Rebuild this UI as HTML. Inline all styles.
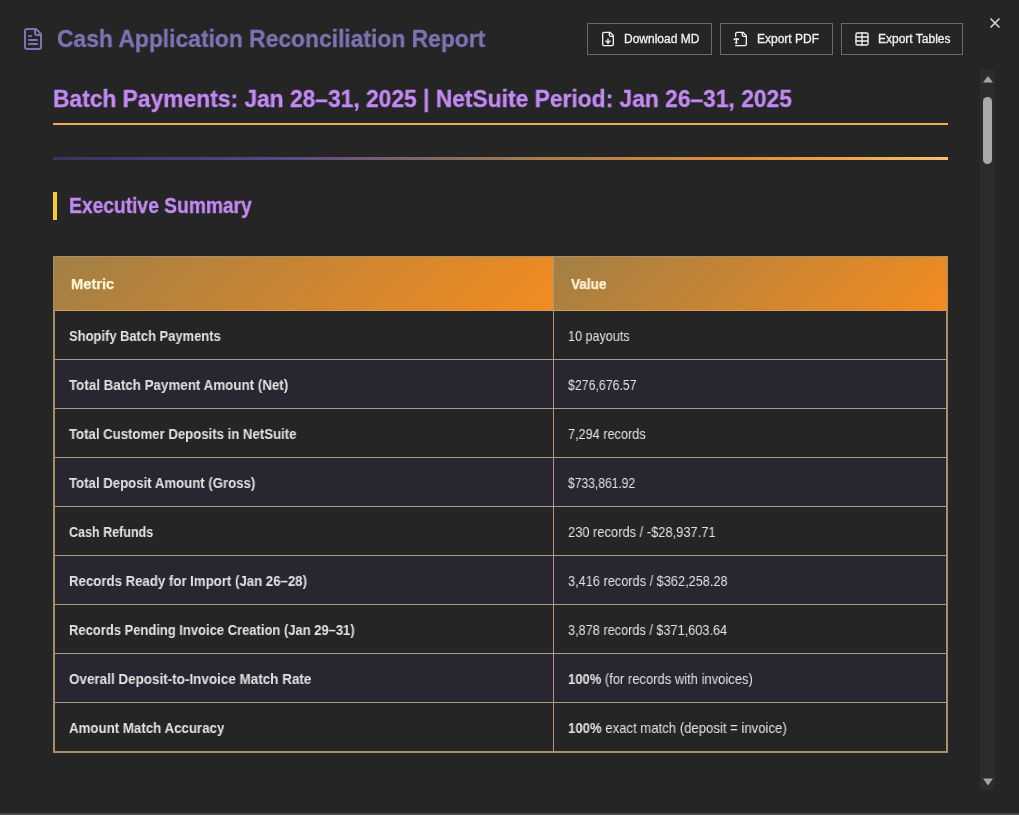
<!DOCTYPE html>
<html><head><meta charset="utf-8">
<style>
*{box-sizing:border-box;margin:0;padding:0}
html,body{width:1019px;height:815px;overflow:hidden;background:#252525;font-family:"Liberation Sans",sans-serif}
.abs{position:absolute}
#title,#h1,#h2,.k,.v,.btn span,.th span{will-change:transform}
#title{-webkit-text-stroke:0.3px #7d74b4}
#h1,#h2{-webkit-text-stroke:0.3px #c38af6}
#ticon{left:21px;top:26.5px;width:24px;height:24px}
#title{left:57px;top:25px;font-size:24px;transform:scaleX(0.952);transform-origin:0 0;font-weight:bold;color:#7d74b4;white-space:nowrap;line-height:28px}
.btn{position:absolute;top:23px;height:32px;border:1px solid #6a6a6a;color:#f0f0f0;font-size:12px;white-space:nowrap}
.btn svg{position:absolute;left:12px;top:7px;width:16px;height:16px}
.btn span{position:absolute;left:36px;top:8px;line-height:14px;-webkit-text-stroke:0.3px #f0f0f0}
#close{left:988px;top:16px;width:14px;height:14px}
#track{left:980px;top:70px;width:15px;height:720px;background:#2c2c2c}
#thumb{left:983px;top:97px;width:9px;height:67px;border-radius:5px;background:#a9a9a9}
#h1{left:53px;top:85px;font-size:24px;transform:scaleX(0.950);transform-origin:0 0;font-weight:bold;color:#c38af6;white-space:nowrap;line-height:28px}
#h1line{left:53px;top:123px;width:895px;height:2px;background:#f3aa55}
#hr{left:53px;top:157px;width:895px;height:3px;background:linear-gradient(90deg,#3a335e 0%,#574889 25%,#8a6e62 45%,#a8804e 55%,#e8903a 80%,#f5c070 100%)}
#h2bar{left:53px;top:192px;width:4px;height:28px;background:#f2cd35}
#h2{left:69.3px;top:193px;font-size:21.2px;transform:scaleX(0.908);transform-origin:0 0;font-weight:bold;color:#c38af6;white-space:nowrap;line-height:26px}
#bottomline{left:0;top:813px;width:1019px;height:2px;background:#4a4a4a}
.th{position:absolute;top:257px;height:53px;z-index:2;background:linear-gradient(135deg,#a27f44 0%,#f28b20 100%);color:#fff4d6;font-size:14px;font-weight:bold;padding:19px 0 0 16px;line-height:16px}
.th span{display:inline-block;transform-origin:0 0;-webkit-text-stroke:0.25px #fff4d6}
.row{position:absolute;left:55px;width:891px;height:48px}
.row.e{background:#272631}
.row.o{background:#252525}
.line,.hline{position:absolute;left:55px;width:891px;height:1px;background:#aa9a86}
.hline{background:#d49a5c}
.vline{position:absolute;left:553px;top:258px;width:1px;height:493px;background:#a89684}
#tborder{position:absolute;left:53px;top:256px;width:895px;height:497px;border:2px solid #a98f68}
.k,.v{position:absolute;line-height:20px;white-space:nowrap;color:#e2e2e2;transform-origin:0 0}
.k{left:69px;font-size:14.2px;font-weight:bold}
.v{left:568px;font-size:14.2px}
.v b{font-weight:bold}
</style></head><body>
<svg class="abs" id="ticon" viewBox="0 0 24 24" fill="none" stroke="#7d74b4" stroke-width="2" stroke-linecap="round" stroke-linejoin="round"><path d="M15 2H6a2 2 0 0 0-2 2v16a2 2 0 0 0 2 2h12a2 2 0 0 0 2-2V7Z"/><path d="M14 2v4a2 2 0 0 0 2 2h4"/><path d="M10 9H8"/><path d="M16 13H8"/><path d="M16 17H8"/></svg>
<div class="abs" id="title">Cash Application Reconciliation Report</div>

<div class="btn" style="left:587px;width:125px"><svg viewBox="0 0 24 24" fill="none" stroke="#f0f0f0" stroke-width="2" stroke-linecap="round" stroke-linejoin="round"><path d="M15 2H6a2 2 0 0 0-2 2v16a2 2 0 0 0 2 2h12a2 2 0 0 0 2-2V7Z"/><path d="M14 2v4a2 2 0 0 0 2 2h4"/><path d="M12 18v-6"/><path d="m9 15 3 3 3-3"/></svg><span>Download MD</span></div>
<div class="btn" style="left:720px;width:113px"><svg viewBox="0 0 24 24" fill="none" stroke="#f0f0f0" stroke-width="2" stroke-linecap="round" stroke-linejoin="round"><path d="M4 22h14a2 2 0 0 0 2-2V7l-5-5H6a2 2 0 0 0-2 2v4"/><path d="M14 2v4a2 2 0 0 0 2 2h4"/><path d="M2 13v-1h6v1"/><path d="M5 12v6"/><path d="M4 18h2"/></svg><span>Export PDF</span></div>
<div class="btn" style="left:841px;width:122px"><svg viewBox="0 0 24 24" fill="none" stroke="#f0f0f0" stroke-width="2" stroke-linecap="round" stroke-linejoin="round"><rect x="3" y="3" width="18" height="18" rx="2"/><path d="M3 9h18"/><path d="M3 15h18"/><path d="M12 3v18"/></svg><span>Export Tables</span></div>

<svg class="abs" id="close" viewBox="0 0 14 14"><path d="M3 3L11 11M11 3L3 11" stroke="#d2d2d2" stroke-width="1.7" stroke-linecap="round"/></svg>

<div class="abs" id="track"></div>
<svg class="abs" style="left:980px;top:72px;width:16px;height:12px" viewBox="0 0 16 12"><path d="M3 10.5L8 4L13 10.5Z" fill="#a3a3a3"/></svg>
<div class="abs" id="thumb"></div>
<svg class="abs" style="left:980px;top:776px;width:16px;height:12px" viewBox="0 0 16 12"><path d="M3 2.5L13 2.5L8 9.5Z" fill="#a3a3a3"/></svg>

<div class="abs" id="h1">Batch Payments: Jan 28–31, 2025 | NetSuite Period: Jan 26–31, 2025</div>
<div class="abs" id="h1line"></div>
<div class="abs" id="hr"></div>
<div class="abs" id="h2bar"></div>
<div class="abs" id="h2">Executive Summary</div>

<div class="th" style="left:54px;width:499px;padding-left:17px"><span style="transform:scaleX(1.05)">Metric</span></div>
<div class="th" style="left:554px;width:393px;padding-left:17px"><span style="transform:scaleX(0.97)">Value</span></div>
<div class="hline" style="top:310px"></div>
<div class="row o" style="top:311px"></div>
<div class="line" style="top:359px"></div>
<div class="k" style="top:326px;transform:scaleX(0.9120)">Shopify Batch Payments</div>
<div class="v" style="top:326px;transform:scaleX(0.8875)">10 payouts</div>
<div class="row e" style="top:360px"></div>
<div class="line" style="top:408px"></div>
<div class="k" style="top:375px;transform:scaleX(0.9429)">Total Batch Payment Amount (Net)</div>
<div class="v" style="top:375px;transform:scaleX(0.8690)">$276,676.57</div>
<div class="row o" style="top:409px"></div>
<div class="line" style="top:457px"></div>
<div class="k" style="top:424px;transform:scaleX(0.9288)">Total Customer Deposits in NetSuite</div>
<div class="v" style="top:424px;transform:scaleX(0.8941)">7,294 records</div>
<div class="row e" style="top:458px"></div>
<div class="line" style="top:506px"></div>
<div class="k" style="top:473px;transform:scaleX(0.9305)">Total Deposit Amount (Gross)</div>
<div class="v" style="top:473px;transform:scaleX(0.8513)">$733,861.92</div>
<div class="row o" style="top:507px"></div>
<div class="line" style="top:555px"></div>
<div class="k" style="top:522px;transform:scaleX(0.8822)">Cash Refunds</div>
<div class="v" style="top:522px;transform:scaleX(0.9086)">230 records / -$28,937.71</div>
<div class="row e" style="top:556px"></div>
<div class="line" style="top:604px"></div>
<div class="k" style="top:571px;transform:scaleX(0.9315)">Records Ready for Import (Jan 26–28)</div>
<div class="v" style="top:571px;transform:scaleX(0.8994)">3,416 records / $362,258.28</div>
<div class="row o" style="top:605px"></div>
<div class="line" style="top:653px"></div>
<div class="k" style="top:620px;transform:scaleX(0.9148)">Records Pending Invoice Creation (Jan 29–31)</div>
<div class="v" style="top:620px;transform:scaleX(0.8965)">3,878 records / $371,603.64</div>
<div class="row e" style="top:654px"></div>
<div class="line" style="top:702px"></div>
<div class="k" style="top:669px;transform:scaleX(0.9487)">Overall Deposit-to-Invoice Match Rate</div>
<div class="v" style="top:669px;transform:scaleX(0.9154)"><b>100%</b> (for records with invoices)</div>
<div class="row o" style="top:703px"></div>
<div class="k" style="top:718px;transform:scaleX(0.9366)">Amount Match Accuracy</div>
<div class="v" style="top:718px;transform:scaleX(0.9259)"><b>100%</b> exact match (deposit = invoice)</div>
<div class="vline"></div>
<div id="tborder"></div>
<div class="abs" id="bottomline"></div>
</body></html>
